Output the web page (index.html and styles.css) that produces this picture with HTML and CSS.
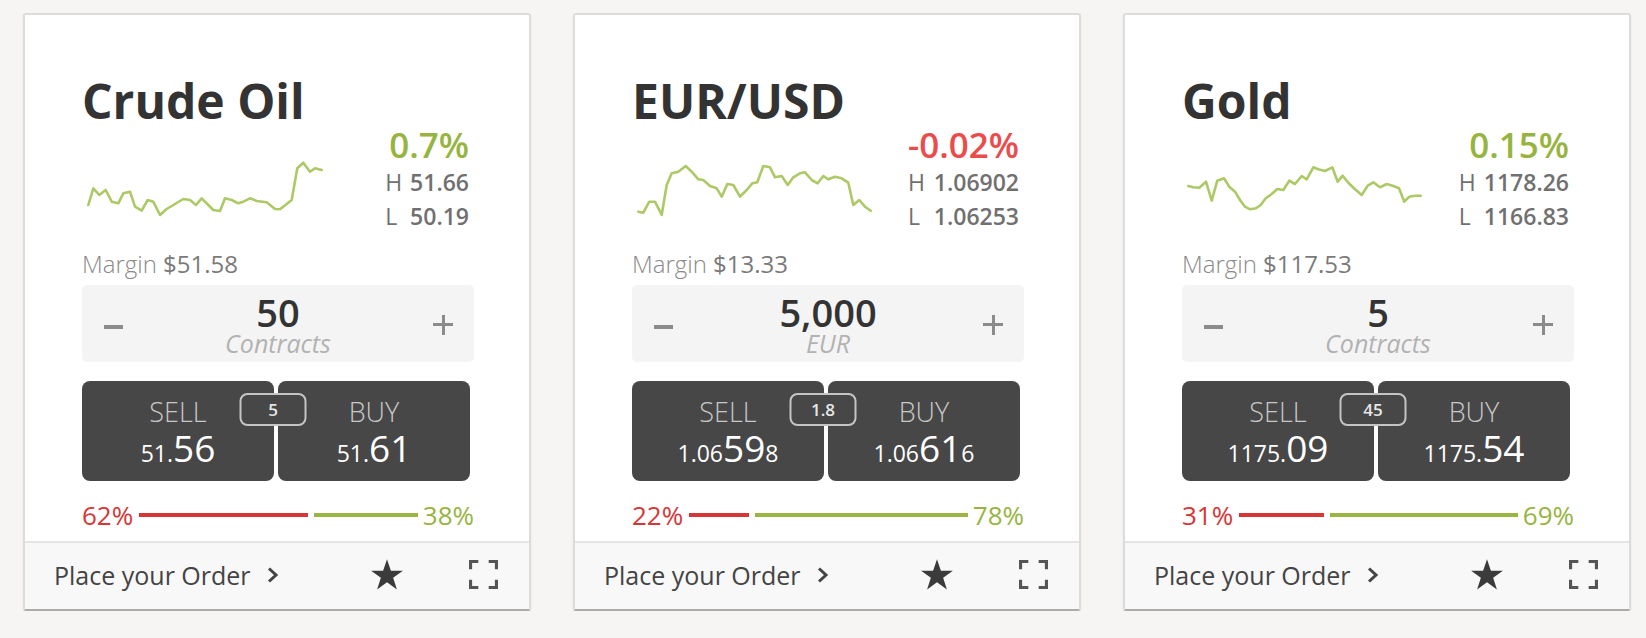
FILE: index.html
```html
<!DOCTYPE html>
<html lang="en">
<head>
    <meta charset="UTF-8">
    <meta name="viewport" content="width=device-width, initial-scale=1.0">
    <title>Markets</title>
    <link rel="stylesheet" href="styles.css">
</head>
<body>
    <div class="cards">

        <!-- Crude Oil -->
        <div class="card">
            <div class="card-body">
                <h2 class="card-title">Crude Oil</h2>
                <div class="quote">
                    <svg class="spark" viewBox="0 0 240 62">
                        <polyline points="2.3,47 7.3,30.3 13.3,37 19.7,32 25.7,43.7 32.3,45.3 37.3,35.3 44,33.7 49,48.7 55.7,52.7 61.7,42 67.3,43.7 74,57 80.7,51 89,46 97.3,41 104,42 110,47 115.7,40.3 122.3,47 127.3,52 134,53 139,40.3 145.7,42 152.3,45.3 157.3,43.7 164,40.3 170.7,43 180.7,44.3 189,51 194,51.3 205.7,42 211.3,10.3 217.3,4.7 224,13.7 229,10.3 235.7,12"/>
                    </svg>
                    <div class="stats">
                        <div class="change up">0.7%</div>
                        <div class="hilo">
                            <span>H</span><span class="val">51.66</span>
                            <span>L</span><span class="val">50.19</span>
                        </div>
                    </div>
                </div>
                <p class="margin">Margin <span>$51.58</span></p>
                <div class="stepper">
                    <span class="minus"></span>
                    <div class="amount"><strong>50</strong><em>Contracts</em></div>
                    <span class="plus"></span>
                </div>
                <div class="trade">
                    <button class="side"><span class="side-name">SELL</span><span class="price"><small>51.</small>56</span></button>
                    <button class="side"><span class="side-name">BUY</span><span class="price"><small>51.</small>61</span></button>
                    <span class="spread">5</span>
                </div>
                <div class="sentiment">
                    <span class="pct sell">62%</span>
                    <div class="bars">
                        <i class="bar sell" style="flex-grow: 62"></i>
                        <i class="bar buy" style="flex-grow: 38"></i>
                    </div>
                    <span class="pct buy">38%</span>
                </div>
            </div>
            <div class="card-foot">
                <a class="order" href="#">Place your Order
                    <svg class="chev" viewBox="0 0 12 16"><path d="M2 1.5l7 6.5-7 6.5"/></svg>
                </a>
                <svg class="star" viewBox="0 0 24 24"><path d="M12 1.5l2.6 7.6h8l-6.5 4.8 2.5 7.7L12 16.8l-6.6 4.8 2.5-7.7L1.4 9.1h8z"/></svg>
                <svg class="expand" viewBox="0 0 28 28"><path d="M1.5 9V1.5H9M19 1.5h7.5V9M26.5 19v7.5H19M9 26.5H1.5V19"/></svg>
            </div>
        </div>

        <!-- EUR/USD -->
        <div class="card">
            <div class="card-body">
                <h2 class="card-title">EUR/USD</h2>
                <div class="quote">
                    <svg class="spark" viewBox="0 0 240 62">
                        <polyline points="2.3,53.7 7.3,54.7 13.3,43.7 19,43.7 25.7,57 30.7,27 35.7,15.3 42.3,13.7 49.7,8 55.7,13.7 62.3,21.3 67.3,22 74,28 80.7,30.3 85.7,38.7 91.3,26 97.3,27 104,38.7 110.7,32 116.3,25.3 121.3,24.3 127.3,8 134,9.3 139,19.3 145.7,18 151.7,27 157.3,19.3 164,15.3 169,14.3 175.7,22 181.7,25.3 187.3,18 192.3,21.3 199,18.7 205.7,20.3 212.3,24.7 217.3,47 223.3,42 229,48.7 234.7,52.7"/>
                    </svg>
                    <div class="stats">
                        <div class="change down">-0.02%</div>
                        <div class="hilo">
                            <span>H</span><span class="val">1.06902</span>
                            <span>L</span><span class="val">1.06253</span>
                        </div>
                    </div>
                </div>
                <p class="margin">Margin <span>$13.33</span></p>
                <div class="stepper">
                    <span class="minus"></span>
                    <div class="amount"><strong>5,000</strong><em>EUR</em></div>
                    <span class="plus"></span>
                </div>
                <div class="trade">
                    <button class="side"><span class="side-name">SELL</span><span class="price"><small>1.06</small>59<small>8</small></span></button>
                    <button class="side"><span class="side-name">BUY</span><span class="price"><small>1.06</small>61<small>6</small></span></button>
                    <span class="spread">1.8</span>
                </div>
                <div class="sentiment">
                    <span class="pct sell">22%</span>
                    <div class="bars">
                        <i class="bar sell" style="flex-grow: 22"></i>
                        <i class="bar buy" style="flex-grow: 78"></i>
                    </div>
                    <span class="pct buy">78%</span>
                </div>
            </div>
            <div class="card-foot">
                <a class="order" href="#">Place your Order
                    <svg class="chev" viewBox="0 0 12 16"><path d="M2 1.5l7 6.5-7 6.5"/></svg>
                </a>
                <svg class="star" viewBox="0 0 24 24"><path d="M12 1.5l2.6 7.6h8l-6.5 4.8 2.5 7.7L12 16.8l-6.6 4.8 2.5-7.7L1.4 9.1h8z"/></svg>
                <svg class="expand" viewBox="0 0 28 28"><path d="M1.5 9V1.5H9M19 1.5h7.5V9M26.5 19v7.5H19M9 26.5H1.5V19"/></svg>
            </div>
        </div>

        <!-- Gold -->
        <div class="card">
            <div class="card-body">
                <h2 class="card-title">Gold</h2>
                <div class="quote">
                    <svg class="spark" viewBox="0 0 240 62">
                        <polyline points="2.3,28 7.3,29.3 13.3,29.7 20,23.7 25.7,42.7 31.3,22.7 38,20.3 43.3,28.7 49,33.7 54,42 59,48.7 64,51.3 70,50.3 74.7,47 79.7,40.3 85.7,36 91.3,31 97.3,32 103.3,22.7 109,26 115.7,18 120.7,21.3 127.3,9.3 132.3,11.3 139,13 146.3,9.3 151.7,23.7 156.7,17.7 162.3,24.7 169,31.3 175.7,37 181.7,27.7 187.3,24.3 194,29.3 200.7,26 206.7,27.7 213,30.3 218.3,43.7 223.3,38.7 229,37.7 234.7,37.7"/>
                    </svg>
                    <div class="stats">
                        <div class="change up">0.15%</div>
                        <div class="hilo">
                            <span>H</span><span class="val">1178.26</span>
                            <span>L</span><span class="val">1166.83</span>
                        </div>
                    </div>
                </div>
                <p class="margin">Margin <span>$117.53</span></p>
                <div class="stepper">
                    <span class="minus"></span>
                    <div class="amount"><strong>5</strong><em>Contracts</em></div>
                    <span class="plus"></span>
                </div>
                <div class="trade">
                    <button class="side"><span class="side-name">SELL</span><span class="price"><small>1175.</small>09</span></button>
                    <button class="side"><span class="side-name">BUY</span><span class="price"><small>1175.</small>54</span></button>
                    <span class="spread">45</span>
                </div>
                <div class="sentiment">
                    <span class="pct sell">31%</span>
                    <div class="bars">
                        <i class="bar sell" style="flex-grow: 31"></i>
                        <i class="bar buy" style="flex-grow: 69"></i>
                    </div>
                    <span class="pct buy">69%</span>
                </div>
            </div>
            <div class="card-foot">
                <a class="order" href="#">Place your Order
                    <svg class="chev" viewBox="0 0 12 16"><path d="M2 1.5l7 6.5-7 6.5"/></svg>
                </a>
                <svg class="star" viewBox="0 0 24 24"><path d="M12 1.5l2.6 7.6h8l-6.5 4.8 2.5 7.7L12 16.8l-6.6 4.8 2.5-7.7L1.4 9.1h8z"/></svg>
                <svg class="expand" viewBox="0 0 28 28"><path d="M1.5 9V1.5H9M19 1.5h7.5V9M26.5 19v7.5H19M9 26.5H1.5V19"/></svg>
            </div>
        </div>

    </div>
</body>
</html>
```

FILE: styles.css
```css
body {
    margin: 0;
    background: #f6f5f3;
    font-family: "Open Sans", "Liberation Sans", sans-serif;
}

.cards {
    display: flex;
    gap: 42px;
    padding: 13px 0 0 23px;
}

.card {
    width: 508px;
    height: 598px;
    box-sizing: border-box;
    display: flex;
    flex-direction: column;
    background: #fff;
    border: 2px solid #dddcd9;
    border-bottom-color: #ababab;
    border-radius: 3px;
    box-shadow: 0 1px 2px rgba(0, 0, 0, 0.08);
}

.card-body {
    flex: 1;
    padding: 62px 55px 0 57px;
}

.card-title {
    margin: 0;
    font-size: 48px;
    line-height: 48px;
    font-weight: 700;
    color: #333;
}

/* chart + change / high / low */
.quote {
    display: flex;
    justify-content: space-between;
    height: 108px;
}

.spark {
    width: 240px;
    height: 62px;
    margin: 33px 0 0 4px;
}

.spark polyline {
    fill: none;
    stroke: #adc966;
    stroke-width: 2.6;
    stroke-linejoin: round;
    stroke-linecap: round;
}

.stats {
    margin-right: 5px;
    text-align: right;
}

.change {
    font-size: 35px;
    line-height: 40px;
    font-weight: 600;
}

.up { color: #97b43f; }
.down { color: #ec4b4b; }

.hilo {
    display: grid;
    grid-template-columns: auto auto;
    column-gap: 8px;
    font-size: 23px;
    line-height: 34px;
    color: #707070;
    text-align: left;
}

.hilo .val {
    font-weight: 600;
    text-align: right;
}

.margin {
    margin: 16px 0 0;
    font-size: 24px;
    line-height: 30px;
    font-weight: 300;
    color: #8a8a8a;
}

.margin span {
    font-weight: 400;
    color: #7a7a7a;
}

/* amount stepper */
.stepper {
    margin-top: 6px;
    height: 77px;
    box-sizing: border-box;
    padding: 0 21px 0 22px;
    display: flex;
    align-items: center;
    justify-content: space-between;
    background: #f4f4f4;
    border-radius: 5px;
}

.minus {
    width: 19px;
    height: 4px;
    margin-top: 7px;
    background: #8b8b8b;
}

.plus {
    position: relative;
    width: 20px;
    height: 20px;
    margin-top: 2px;
}

.plus::before,
.plus::after {
    content: "";
    position: absolute;
    background: #8b8b8b;
}

.plus::before { left: 0; right: 0; top: 8.5px; height: 3px; }
.plus::after { top: 0; bottom: 0; left: 8.5px; width: 3px; }

.amount {
    display: flex;
    flex-direction: column;
    align-items: center;
}

.amount strong {
    font-size: 38px;
    line-height: 38px;
    font-weight: 600;
    color: #333;
}

.amount em {
    font-size: 25px;
    line-height: 24px;
    font-weight: 500;
    color: #b2b2b2;
}

/* sell / buy buttons */
.trade {
    position: relative;
    display: grid;
    grid-template-columns: 1fr 1fr;
    gap: 4px;
    width: calc(100% - 4px);
    height: 100px;
    margin-top: 19px;
}

.side {
    display: flex;
    flex-direction: column;
    align-items: center;
    padding: 15px 0 0;
    border: none;
    border-radius: 8px;
    background: #474747;
    color: #fff;
    font-family: inherit;
    cursor: pointer;
}

.side-name {
    font-size: 27px;
    line-height: 31px;
    font-weight: 300;
    color: #c8c8c8;
}

.price {
    font-size: 37px;
    line-height: 40px;
    margin-top: 1px;
}

.price small {
    font-size: 23px;
    line-height: 1;
}

.spread {
    position: absolute;
    top: 12px;
    left: 50%;
    transform: translateX(calc(-50% - 3px));
    width: 67px;
    height: 33px;
    box-sizing: border-box;
    border: 2px solid #c4c4c4;
    border-radius: 8px;
    background: #474747;
    color: #e6e6e6;
    font-size: 17px;
    font-weight: 600;
    line-height: 29px;
    text-align: center;
}

/* sell / buy sentiment */
.sentiment {
    display: flex;
    align-items: center;
    height: 30px;
    margin-top: 19px;
    font-size: 26px;
    line-height: 30px;
}

.pct.sell { color: #d83636; }
.pct.buy { color: #97b43f; }

.bars {
    flex: 1;
    display: flex;
    gap: 6px;
    margin: 0 5px 0 6px;
}

.bar {
    height: 4px;
    flex-basis: 0;
}

.bar.sell { background: #d83636; }
.bar.buy { background: #9ab541; }

/* footer */
.card-foot {
    height: 68px;
    box-sizing: border-box;
    display: flex;
    align-items: center;
    padding: 0 31px 3px 29px;
    border-top: 2px solid #e5e5e5;
    background: #f8f8f8;
}

.order {
    display: flex;
    align-items: center;
    gap: 16px;
    font-size: 25px;
    color: #444;
    text-decoration: none;
}

.chev {
    width: 12px;
    height: 16px;
}

.chev path {
    fill: none;
    stroke: #444;
    stroke-width: 3;
}

.star {
    width: 38px;
    height: 36px;
    margin: 0 63px 0 auto;
    fill: #3b3b3b;
}

.expand {
    width: 29px;
    height: 29px;
}

.expand path {
    fill: none;
    stroke: #555;
    stroke-width: 3;
}
```
